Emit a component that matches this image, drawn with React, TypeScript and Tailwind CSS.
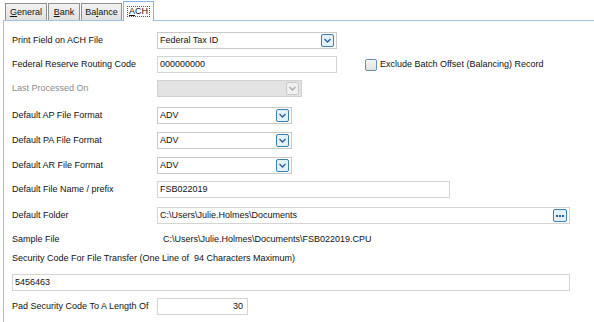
import React from "react";

function Chevron({ disabled }: { disabled?: boolean }) {
  return (
    <div
      className={`w-[13px] h-[13px] rounded-[2px] border flex items-center justify-center ${
        disabled ? "border-[#c8c8c8] bg-[#f0f0f0]" : "border-[#3c7fb1] bg-[#e3f1fb]"
      }`}
    >
      <svg width="7" height="5" viewBox="0 0 7 5">
        <path d="M0.5 1 L3.5 4 L6.5 1" fill="none" stroke={disabled ? "#a8a8a8" : "#2a5f93"} strokeWidth="1.3" />
      </svg>
    </div>
  );
}

function Select({ value, width, disabled }: { value?: string; width: string; disabled?: boolean }) {
  return (
    <div
      className={`${width} h-[17px] border flex items-center justify-between pl-[2px] pr-[2px] ${
        disabled ? "bg-[#e3e3e3] border-[#d0d0d0]" : "bg-white border-[#c9c9c9]"
      }`}
    >
      <span>{value}</span>
      <Chevron disabled={disabled} />
    </div>
  );
}

function Input({ value, width, right, children }: { value: string; width: string; right?: boolean; children?: React.ReactNode }) {
  return (
    <div className={`${width} h-[17px] border border-[#d4d4d4] bg-white flex items-center px-[2px] ${right ? "justify-end pr-[4px]" : "justify-between"}`}>
      <span>{value}</span>
      {children}
    </div>
  );
}

function Row({ label, children, className, dim }: { label: string; children: React.ReactNode; className: string; dim?: boolean }) {
  return (
    <div className={`flex items-center h-[17px] ${className}`}>
      <div className={`w-[145px] shrink-0 whitespace-nowrap ${dim ? "text-[#8c8c8c]" : ""}`}>{label}</div>
      {children}
    </div>
  );
}

export default function App() {
  return (
    <div
      className="w-[594px] h-[322px] bg-white text-[#111] text-[9px] leading-none overflow-hidden whitespace-nowrap"
      style={{ fontFamily: '"Liberation Sans", Arial, sans-serif' }}
    >
      <div className="flex items-end h-[20px] pl-[5px] gap-[1px]">
        <div className="w-[42px] h-[17px] border border-b-0 border-[#8e8f8f] bg-gradient-to-b from-[#f2f2f2] to-[#e1e1e1] flex items-center justify-center">
          <span className="underline">G</span>eneral
        </div>
        <div className="w-[32px] h-[17px] border border-b-0 border-[#8e8f8f] bg-gradient-to-b from-[#f2f2f2] to-[#e1e1e1] flex items-center justify-center">
          <span className="underline">B</span>ank
        </div>
        <div className="w-[41px] h-[17px] border border-b-0 border-[#8e8f8f] bg-gradient-to-b from-[#f2f2f2] to-[#e1e1e1] flex items-center justify-center">
          Ba<span className="underline">l</span>ance
        </div>
        <div className="w-[31px] h-[20px] border border-b-0 border-[#7eb4ea] bg-white flex items-center justify-center -mb-[1px] relative z-10">
          <span className="outline-1 outline-dotted outline-[#555] px-[1px]">
            <span className="underline">A</span>CH
          </span>
        </div>
      </div>
      <div className="ml-[3px] h-[302px] border-t border-l border-[#9ec3e6] pt-[11px] pl-[8px]">
        <Row label="Print Field on ACH File" className="">
          <Select value="Federal Tax ID" width="w-[180px]" />
        </Row>
        <Row label="Federal Reserve Routing Code" className="mt-[7px]">
          <Input value="000000000" width="w-[180px]" />
          <div className="ml-[28px] flex items-center">
            <div className="w-[12px] h-[12px] rounded-[2px] border border-[#6a8fb5] bg-gradient-to-b from-[#f4f4f4] to-[#e2e2e2]" />
            <span className="ml-[3px]">Exclude Batch Offset (Balancing) Record</span>
          </div>
        </Row>
        <Row label="Last Processed On" className="mt-[7px]" dim>
          <Select width="w-[145px]" disabled />
        </Row>
        <Row label="Default AP File Format" className="mt-[10px]">
          <Select value="ADV" width="w-[135px]" />
        </Row>
        <Row label="Default PA File Format" className="mt-[8px]">
          <Select value="ADV" width="w-[135px]" />
        </Row>
        <Row label="Default AR File Format" className="mt-[8px]">
          <Select value="ADV" width="w-[135px]" />
        </Row>
        <Row label="Default File Name / prefix" className="mt-[7px]">
          <Input value="FSB022019" width="w-[293px]" />
        </Row>
        <Row label="Default Folder" className="mt-[9px]">
          <Input value="C:\Users\Julie.Holmes\Documents" width="w-[413px]">
            <div className="w-[14px] h-[13px] rounded-[2px] border border-[#3c7fb1] bg-[#e3f1fb] flex items-center justify-center gap-[1px]">
              <div className="w-[2px] h-[2px] bg-[#2a5f93]" />
              <div className="w-[2px] h-[2px] bg-[#2a5f93]" />
              <div className="w-[2px] h-[2px] bg-[#2a5f93]" />
            </div>
          </Input>
        </Row>
        <Row label="Sample File" className="mt-[7px]">
          <span className="ml-[6px]">C:\Users\Julie.Holmes\Documents\FSB022019.CPU</span>
        </Row>
        <div className="mt-[2px] h-[17px] flex items-center">
          Security Code For File Transfer (One Line of&nbsp; 94 Characters Maximum)
        </div>
        <div className="mt-[7px]">
          <Input value="5456463" width="w-[558px]" />
        </div>
        <Row label="Pad Security Code To A Length Of" className="mt-[7px]">
          <Input value="30" width="w-[91px]" right />
        </Row>
      </div>
    </div>
  );
}
